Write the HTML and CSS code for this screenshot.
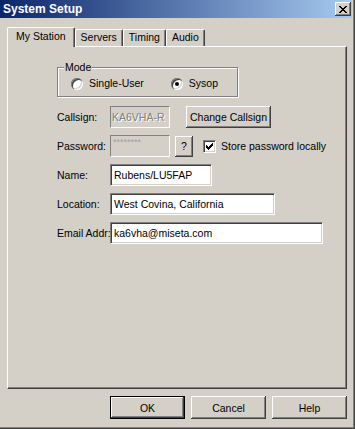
FILE: index.html
```html
<!DOCTYPE html>
<html lang="en">
<head>
<meta charset="utf-8"/>
<title>System Setup</title>
<link rel="stylesheet" href="styles.css">
</head>
<body>
<div class="window">
  <div class="titlebar">
    <span class="title">System Setup</span>
    <span class="close">
      <svg width="8" height="7" viewBox="0 0 8 7" shape-rendering="crispEdges"><path fill="#000" d="M0 0h2v1H0zM6 0h2v1H6zM1 1h2v1H1zM5 1h2v1H5zM2 2h4v1H2zM3 3h2v1H3zM2 4h4v1H2zM1 5h2v1H1zM5 5h2v1H5zM0 6h2v1H0zM6 6h2v1H6z"/></svg>
    </span>
  </div>

  <div class="tabs">
    <div class="tab active">My Station</div>
    <div class="tab">Servers</div>
    <div class="tab">Timing</div>
    <div class="tab">Audio</div>
  </div>

  <div class="panel">
    <fieldset class="mode">
      <legend>Mode</legend>
      <div class="opts">
        <span class="opt"><span class="radio"></span>Single-User</span>
        <span class="opt"><span class="radio checked"></span>Sysop</span>
      </div>
    </fieldset>

    <div class="rows">
      <div class="row">
        <span class="lbl">Callsign:</span>
        <span class="field disabled w-short">KA6VHA-R</span>
        <span class="btn btn-change">Change Callsign</span>
      </div>
      <div class="row">
        <span class="lbl">Password:</span>
        <span class="field disabled w-short stars">********</span>
        <span class="btn btn-help">?</span>
        <span class="check">
          <svg width="7" height="7" viewBox="0 0 7 7" shape-rendering="crispEdges"><path fill="#000" d="M6 0h1v3H6zM5 1h1v3H5zM4 2h1v3H4zM3 3h1v3H3zM2 4h1v3H2zM1 3h1v3H1zM0 2h1v3H0z"/></svg>
        </span>
        <span class="check-lbl">Store password locally</span>
      </div>
      <div class="row">
        <span class="lbl">Name:</span>
        <span class="field w-name">Rubens/LU5FAP</span>
      </div>
      <div class="row">
        <span class="lbl">Location:</span>
        <span class="field w-loc">West Covina, California</span>
      </div>
      <div class="row">
        <span class="lbl">Email Addr:</span>
        <span class="field w-mail">ka6vha@miseta.com</span>
      </div>
    </div>
  </div>

  <div class="actions">
    <span class="btn btn-act default">OK</span>
    <span class="btn btn-act">Cancel</span>
    <span class="btn btn-act">Help</span>
  </div>
</div>
</body>
</html>
```

FILE: styles.css
```css
body {
  margin: 0;
  font-family: "Liberation Sans", Arial, sans-serif;
  font-size: 10.5px;
  color: #000;
  background: #d4d0c8;
}
.window {
  width: 355px;
  height: 429px;
  background: #d4d0c8;
  box-sizing: border-box;
  box-shadow: inset -1px -1px #404040, inset -2px -2px #808080;
  display: flex;
  flex-direction: column;
}
.titlebar {
  height: 18px;
  width: 352px;
  box-sizing: border-box;
  padding: 0 1px 0 3px;
  background: linear-gradient(to right, #0a246a, #a6caf0);
  display: flex;
  align-items: center;
  justify-content: space-between;
}
.title {
  color: #fff;
  font-weight: bold;
  font-size: 12px;
}
.close {
  width: 16px;
  height: 14px;
  background: #d4d0c8;
  box-shadow: inset -1px -1px #404040, inset 1px 1px #fff, inset -2px -2px #808080;
  display: flex;
  align-items: center;
  justify-content: center;
}
.tabs {
  display: flex;
  align-items: flex-end;
  height: 19px;
  margin-top: 9px;
  padding-left: 7px;
  position: relative;
  z-index: 1;
}
.tab {
  height: 16px;
  line-height: 15px;
  padding: 0 5px;
  background: #d4d0c8;
  border-top: 1px solid #fff;
  border-left: 1px solid #fff;
  border-right: 1px solid #404040;
  box-shadow: inset -1px 0 #808080;
  border-radius: 2px 2px 0 0;
}
.tab.active {
  height: 19px;
  line-height: 17px;
  padding: 0 8px;
  margin-bottom: -1px;
}
.panel {
  width: 340px;
  height: 343px;
  margin-left: 7px;
  box-sizing: border-box;
  border: 1px solid;
  border-color: #fff #404040 #404040 #fff;
  box-shadow: inset -1px -1px #808080;
  padding: 14px 0 0 49px;
}
.mode {
  width: 181px;
  box-sizing: border-box;
  margin: 0;
  padding: 3px 0 6px 13px;
  border: 1px solid #808080;
  box-shadow: inset 1px 1px #fff, 1px 1px #fff;
}
.mode legend {
  padding: 0 1px;
  margin-left: -7px;
  line-height: 13px;
  background: #d4d0c8;
}
.opts {
  display: flex;
  gap: 27px;
}
.opt {
  display: flex;
  align-items: center;
  gap: 6px;
  line-height: 13px;
}
.radio {
  width: 12px;
  height: 12px;
  border-radius: 50%;
  background: #fff;
  box-shadow: inset 1px 1px #808080, inset 2px 2px #404040, inset -1px -1px #fff, inset -2px -2px #d4d0c8;
  display: flex;
  align-items: center;
  justify-content: center;
}
.radio.checked::after {
  content: "";
  width: 4px;
  height: 4px;
  border-radius: 50%;
  background: #000;
}
.rows {
  margin-top: 9px;
  display: flex;
  flex-direction: column;
  gap: 7px;
}
.row {
  display: flex;
  align-items: center;
  height: 22px;
}
.lbl {
  width: 53px;
  flex-shrink: 0;
  white-space: nowrap;
}
.field {
  height: 22px;
  line-height: 20px;
  box-sizing: border-box;
  padding: 0 3px;
  flex-shrink: 0;
  background: #fff;
  border: 1px solid;
  border-color: #808080 #fff #fff #808080;
  box-shadow: inset 1px 1px #404040, inset -1px -1px #d4d0c8;
  white-space: nowrap;
  overflow: hidden;
}
.field.disabled {
  padding: 0 1px;
  background: #d4d0c8;
  color: #808080;
  text-shadow: 1px 1px #fff;
  box-shadow: none;
}
.field.stars {
  padding: 0 2px;
  font-size: 9px;
  line-height: 12px;
  text-shadow: none;
  color: #a0a0a0;
}
.w-short { width: 60px; }
.w-name { width: 102px; }
.w-loc { width: 165px; }
.w-mail { width: 213px; }
.btn {
  display: flex;
  align-items: center;
  justify-content: center;
  flex-shrink: 0;
  box-sizing: border-box;
  background: #d4d0c8;
  box-shadow: inset -1px -1px #404040, inset 1px 1px #fff, inset -2px -2px #808080;
}
.btn-change {
  margin-left: 16px;
  width: 85px;
  height: 22px;
}
.btn-help {
  margin-left: 5px;
  width: 18px;
  height: 21px;
}
.check {
  margin-left: 10px;
  width: 13px;
  height: 13px;
  flex-shrink: 0;
  box-sizing: border-box;
  background: #fff;
  border: 1px solid;
  border-color: #808080 #fff #fff #808080;
  box-shadow: inset 1px 1px #404040, inset -1px -1px #d4d0c8;
  display: flex;
  align-items: center;
  justify-content: center;
}
.check-lbl {
  margin-left: 5px;
  white-space: nowrap;
}
.actions {
  display: flex;
  justify-content: flex-end;
  gap: 6px;
  margin-top: 7px;
  padding-right: 8px;
}
.btn-act {
  width: 75px;
  height: 23px;
}
.btn-act.default {
  border: 1px solid #000;
}
```
